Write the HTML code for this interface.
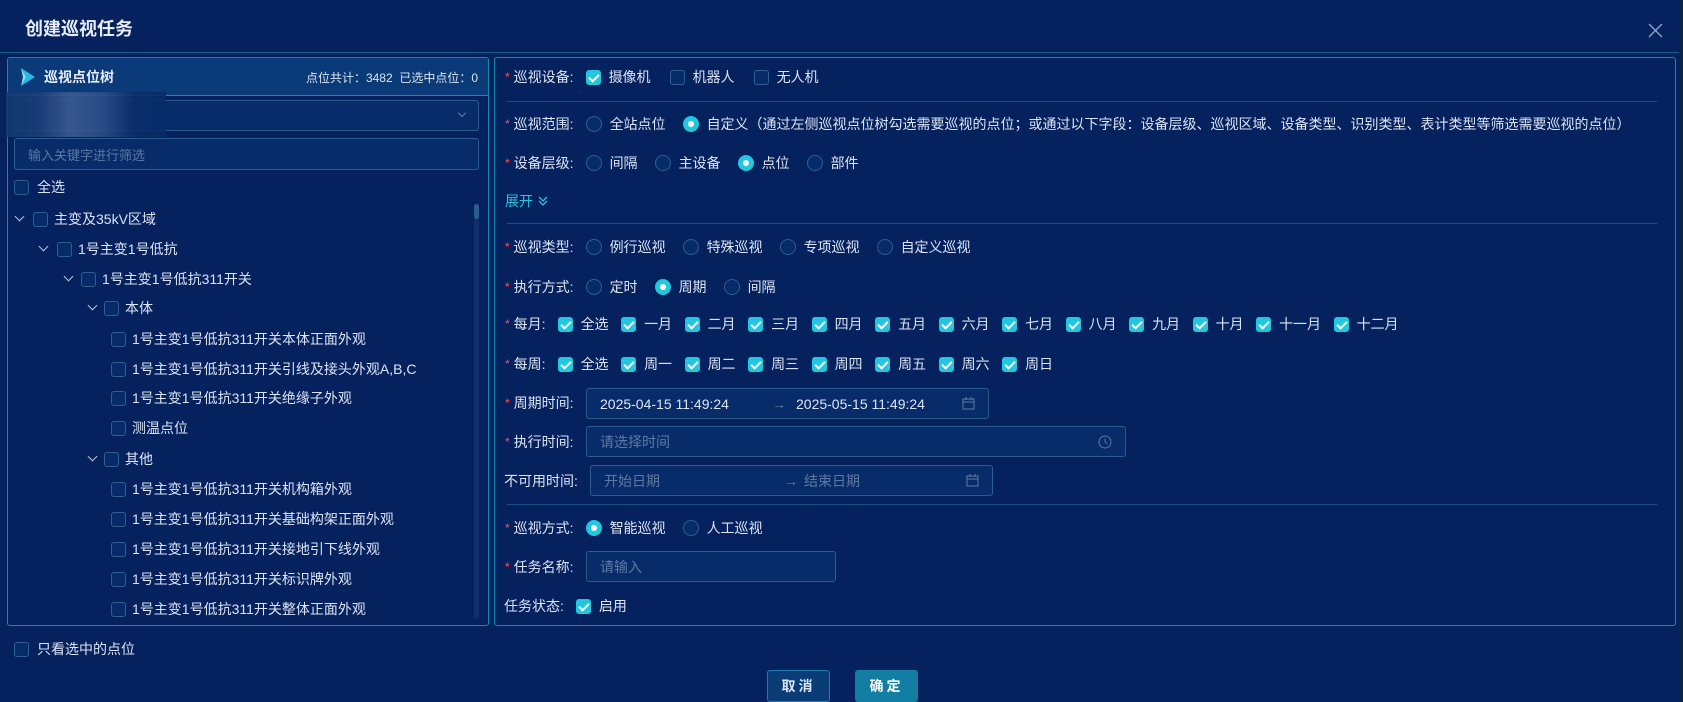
<!DOCTYPE html>
<html><head><meta charset="utf-8"><style>
*{box-sizing:border-box;margin:0;padding:0}
body{width:1683px;height:702px;background:#05215e;font-family:"Liberation Sans","Noto Sans CJK SC",sans-serif;font-size:14px;color:#dbe4f3;position:relative;overflow:hidden}
.abs{position:absolute}
.title{left:25px;top:15px;font-size:18px;font-weight:bold;color:#e6edf8}
.hdiv{left:0;top:52px;width:1683px;height:1px;background:#155b8c}
.panel{border:1px solid #1688ad;border-radius:3px}
.cb{display:inline-block;width:15px;height:15px;border:1px solid #2d5f92;border-radius:3px;background:#062b68;vertical-align:middle;position:relative}
.cb.on{background:#22c6df;border-color:#22c6df}
.cb.on:after{content:"";position:absolute;left:4px;top:1px;width:4px;height:8px;border:solid #fff;border-width:0 2px 2px 0;transform:rotate(45deg)}
.rd{display:inline-block;width:16px;height:16px;border:1px solid #2d5f92;border-radius:50%;background:#062b68;vertical-align:middle;position:relative}
.rd.on{background:#22c6df;border-color:#22c6df}
.rd.on:after{content:"";position:absolute;left:4px;top:4px;width:6px;height:6px;border-radius:50%;background:#fff}
.row{position:absolute;left:505px;display:flex;align-items:center;white-space:nowrap;height:20px}
.row .st{color:#ff4d4f;margin-right:4px;font-size:12px}
.row .lb{margin-right:12px}
.opt{display:flex;align-items:center;margin-right:19px}
.opt .cb{margin-right:8px}
.opt .rd{margin-right:8px}
.ro .opt{margin-right:17px}
.mo .opt{margin-right:12.5px}
.inp{position:absolute;border:1px solid #2a5c8e;border-radius:3px;background:#072c69;height:31px;display:flex;align-items:center;padding-left:13px;color:#dbe4f3}
.ph{color:#5f78a3}
.divr{position:absolute;left:507px;width:1150px;height:1px;background:#1b4f87}
.tr{position:absolute;display:flex;align-items:center;white-space:nowrap;height:20px}
.arr{position:absolute;width:7px;height:7px;border:solid #b8c6dc;border-width:0 1.3px 1.3px 0;transform:rotate(45deg)}
</style></head><body>
<div class="abs title">创建巡视任务</div>
<svg class="abs" style="left:1648px;top:23px" width="15" height="15" viewBox="0 0 15 15"><path d="M1 1L14 14M14 1L1 14" stroke="#8ea2c4" stroke-width="1.4"/></svg>
<div class="abs hdiv"></div>

<div class="abs panel" style="left:7px;top:57px;width:482px;height:569px;overflow:hidden">
  <div style="height:38px;background:#0a3a77;border-bottom:1px solid #1688ad"></div>
</div>
<svg class="abs" style="left:20px;top:67px" width="16" height="20" viewBox="0 0 16 20"><path d="M1 1L15 10L1 19L6 10Z" fill="#2bb8e6"/><path d="M1 1L6 10L1 19L3 10Z" fill="#8fe0f8"/></svg>
<div class="abs" style="left:44px;top:67px;font-weight:bold;color:#e6edf8">巡视点位树</div>
<div class="abs" style="left:300px;top:69px;width:178px;text-align:right;font-size:12px">点位共计：3482&nbsp; 已选中点位：0</div>
<div class="abs" style="left:13px;top:100px;width:466px;height:31px;border:1px solid #2a5c8e;border-radius:3px;background:#072c69"></div>
<div class="abs" style="left:6px;top:92px;width:160px;height:45px;background:linear-gradient(90deg,#0f3a6e 0,#1b3d78 20%,#3c5a92 40%,#2b4f88 60%,#0b2e6a 80%,#072c69 100%);opacity:.9"></div>
<div class="abs arr" style="left:459px;top:110px;width:6px;height:6px;border-color:#5f78a3"></div>
<div class="inp" style="left:14px;top:138px;width:465px;height:32px"><span class="ph" style="font-size:13px">输入关键字进行筛选</span></div>
<div class="tr" style="left:14px;top:177px"><span class="cb" style="margin-right:8px"></span>全选</div>
<div class="abs" style="left:474px;top:204px;width:5px;height:15px;border-radius:3px;background:#2a5c8e"></div>
<div class="abs" style="left:474px;top:204px;width:5px;height:415px;border-radius:3px;background:rgba(42,92,142,.25)"></div>

<div class="arr" style="left:16px;top:213px"></div><div class="tr" style="left:33px;top:209px"><span class="cb" style="margin-right:6px"></span>主变及35kV区域</div>
<div class="arr" style="left:40px;top:243px"></div><div class="tr" style="left:57px;top:239px"><span class="cb" style="margin-right:6px"></span>1号主变1号低抗</div>
<div class="arr" style="left:65px;top:273px"></div><div class="tr" style="left:81px;top:269px"><span class="cb" style="margin-right:6px"></span>1号主变1号低抗311开关</div>
<div class="arr" style="left:89px;top:302px"></div><div class="tr" style="left:104px;top:298px"><span class="cb" style="margin-right:6px"></span>本体</div>
<div class="tr" style="left:111px;top:329px"><span class="cb" style="margin-right:6px"></span>1号主变1号低抗311开关本体正面外观</div>
<div class="tr" style="left:111px;top:359px"><span class="cb" style="margin-right:6px"></span>1号主变1号低抗311开关引线及接头外观A,B,C</div>
<div class="tr" style="left:111px;top:388px"><span class="cb" style="margin-right:6px"></span>1号主变1号低抗311开关绝缘子外观</div>
<div class="tr" style="left:111px;top:418px"><span class="cb" style="margin-right:6px"></span>测温点位</div>
<div class="arr" style="left:89px;top:453px"></div><div class="tr" style="left:104px;top:449px"><span class="cb" style="margin-right:6px"></span>其他</div>
<div class="tr" style="left:111px;top:479px"><span class="cb" style="margin-right:6px"></span>1号主变1号低抗311开关机构箱外观</div>
<div class="tr" style="left:111px;top:509px"><span class="cb" style="margin-right:6px"></span>1号主变1号低抗311开关基础构架正面外观</div>
<div class="tr" style="left:111px;top:539px"><span class="cb" style="margin-right:6px"></span>1号主变1号低抗311开关接地引下线外观</div>
<div class="tr" style="left:111px;top:569px"><span class="cb" style="margin-right:6px"></span>1号主变1号低抗311开关标识牌外观</div>
<div class="tr" style="left:111px;top:599px"><span class="cb" style="margin-right:6px"></span>1号主变1号低抗311开关整体正面外观</div>
<div class="tr" style="left:14px;top:639px"><span class="cb" style="margin-right:8px"></span>只看选中的点位</div>

<div class="abs panel" style="left:494px;top:57px;width:1182px;height:569px"></div>
<div class="row" style="top:67px"><span class="st">*</span><span class="lb">巡视设备:</span><span class="opt"><span class="cb on"></span>摄像机</span><span class="opt"><span class="cb"></span>机器人</span><span class="opt"><span class="cb"></span>无人机</span></div>
<div class="divr" style="top:101px"></div>
<div class="row ro" style="top:114px"><span class="st">*</span><span class="lb">巡视范围:</span><span class="opt"><span class="rd"></span>全站点位</span><span class="opt"><span class="rd on"></span>自定义（通过左侧巡视点位树勾选需要巡视的点位；或通过以下字段：设备层级、巡视区域、设备类型、识别类型、表计类型等筛选需要巡视的点位）</span></div>
<div class="row ro" style="top:153px"><span class="st">*</span><span class="lb">设备层级:</span><span class="opt"><span class="rd"></span>间隔</span><span class="opt"><span class="rd"></span>主设备</span><span class="opt"><span class="rd on"></span>点位</span><span class="opt"><span class="rd"></span>部件</span></div>
<div class="row" style="top:191px;color:#22c6df">展开&nbsp;<svg width="12" height="12" viewBox="0 0 12 12"><path d="M2 2L6 6L10 2M2 6L6 10L10 6" stroke="#22c6df" stroke-width="1.3" fill="none"/></svg></div>
<div class="divr" style="top:223px"></div>
<div class="row ro" style="top:237px"><span class="st">*</span><span class="lb">巡视类型:</span><span class="opt"><span class="rd"></span>例行巡视</span><span class="opt"><span class="rd"></span>特殊巡视</span><span class="opt"><span class="rd"></span>专项巡视</span><span class="opt"><span class="rd"></span>自定义巡视</span></div>
<div class="row ro" style="top:277px"><span class="st">*</span><span class="lb">执行方式:</span><span class="opt"><span class="rd"></span>定时</span><span class="opt"><span class="rd on"></span>周期</span><span class="opt"><span class="rd"></span>间隔</span></div>
<div class="row mo" style="top:314px"><span class="st">*</span><span class="lb">每月:</span><span class="opt"><span class="cb on"></span>全选</span><span class="opt"><span class="cb on"></span>一月</span><span class="opt"><span class="cb on"></span>二月</span><span class="opt"><span class="cb on"></span>三月</span><span class="opt"><span class="cb on"></span>四月</span><span class="opt"><span class="cb on"></span>五月</span><span class="opt"><span class="cb on"></span>六月</span><span class="opt"><span class="cb on"></span>七月</span><span class="opt"><span class="cb on"></span>八月</span><span class="opt"><span class="cb on"></span>九月</span><span class="opt"><span class="cb on"></span>十月</span><span class="opt"><span class="cb on"></span>十一月</span><span class="opt"><span class="cb on"></span>十二月</span></div>
<div class="row mo" style="top:354px"><span class="st">*</span><span class="lb">每周:</span><span class="opt"><span class="cb on"></span>全选</span><span class="opt"><span class="cb on"></span>周一</span><span class="opt"><span class="cb on"></span>周二</span><span class="opt"><span class="cb on"></span>周三</span><span class="opt"><span class="cb on"></span>周四</span><span class="opt"><span class="cb on"></span>周五</span><span class="opt"><span class="cb on"></span>周六</span><span class="opt"><span class="cb on"></span>周日</span></div>
<div class="row" style="top:393px"><span class="st">*</span><span class="lb">周期时间:</span></div>
<div class="inp" style="left:586px;top:388px;width:403px"><span style="width:172px">2025-04-15 11:49:24</span><span class="ph" style="width:24px">→</span><span>2025-05-15 11:49:24</span></div>
<svg class="abs" style="left:962px;top:397px" width="13" height="13" viewBox="0 0 13 13"><rect x="1" y="2" width="11" height="10" fill="none" stroke="#5f78a3"/><path d="M1 5H12M4 0V3M9 0V3" stroke="#5f78a3"/></svg>
<div class="row" style="top:432px"><span class="st">*</span><span class="lb">执行时间:</span></div>
<div class="inp" style="left:586px;top:426px;width:540px"><span class="ph">请选择时间</span></div>
<svg class="abs" style="left:1098px;top:435px" width="14" height="14" viewBox="0 0 14 14"><circle cx="7" cy="7" r="6" fill="none" stroke="#5f78a3"/><path d="M7 3.5V7L9.5 8.5" stroke="#5f78a3" fill="none"/></svg>
<div class="row" style="top:471px;left:504px"><span class="lb">不可用时间:</span></div>
<div class="inp" style="left:590px;top:465px;width:403px"><span class="ph" style="width:180px">开始日期</span><span class="ph" style="width:20px">→</span><span class="ph">结束日期</span></div>
<svg class="abs" style="left:966px;top:474px" width="13" height="13" viewBox="0 0 13 13"><rect x="1" y="2" width="11" height="10" fill="none" stroke="#5f78a3"/><path d="M1 5H12M4 0V3M9 0V3" stroke="#5f78a3"/></svg>
<div class="divr" style="top:504px"></div>
<div class="row ro" style="top:518px"><span class="st">*</span><span class="lb">巡视方式:</span><span class="opt"><span class="rd on"></span>智能巡视</span><span class="opt"><span class="rd"></span>人工巡视</span></div>
<div class="row" style="top:557px"><span class="st">*</span><span class="lb">任务名称:</span></div>
<div class="inp" style="left:586px;top:551px;width:250px"><span class="ph">请输入</span></div>
<div class="row" style="top:596px;left:504px"><span class="lb">任务状态:</span><span class="opt"><span class="cb on"></span>启用</span></div>

<div class="abs" style="left:767px;top:670px;width:63px;height:32px;border:1px solid #1a7fa8;border-radius:3px;background:#0a3d78;text-align:center;line-height:30px;font-weight:bold;letter-spacing:3px">取消</div>
<div class="abs" style="left:855px;top:670px;width:63px;height:32px;border-radius:3px;background:#137ea3;text-align:center;line-height:32px;font-weight:bold;letter-spacing:3px;color:#fff">确定</div>
<div class="abs" style="left:1679px;top:0;width:4px;height:702px;background:#0b2448"></div>
</body></html>
